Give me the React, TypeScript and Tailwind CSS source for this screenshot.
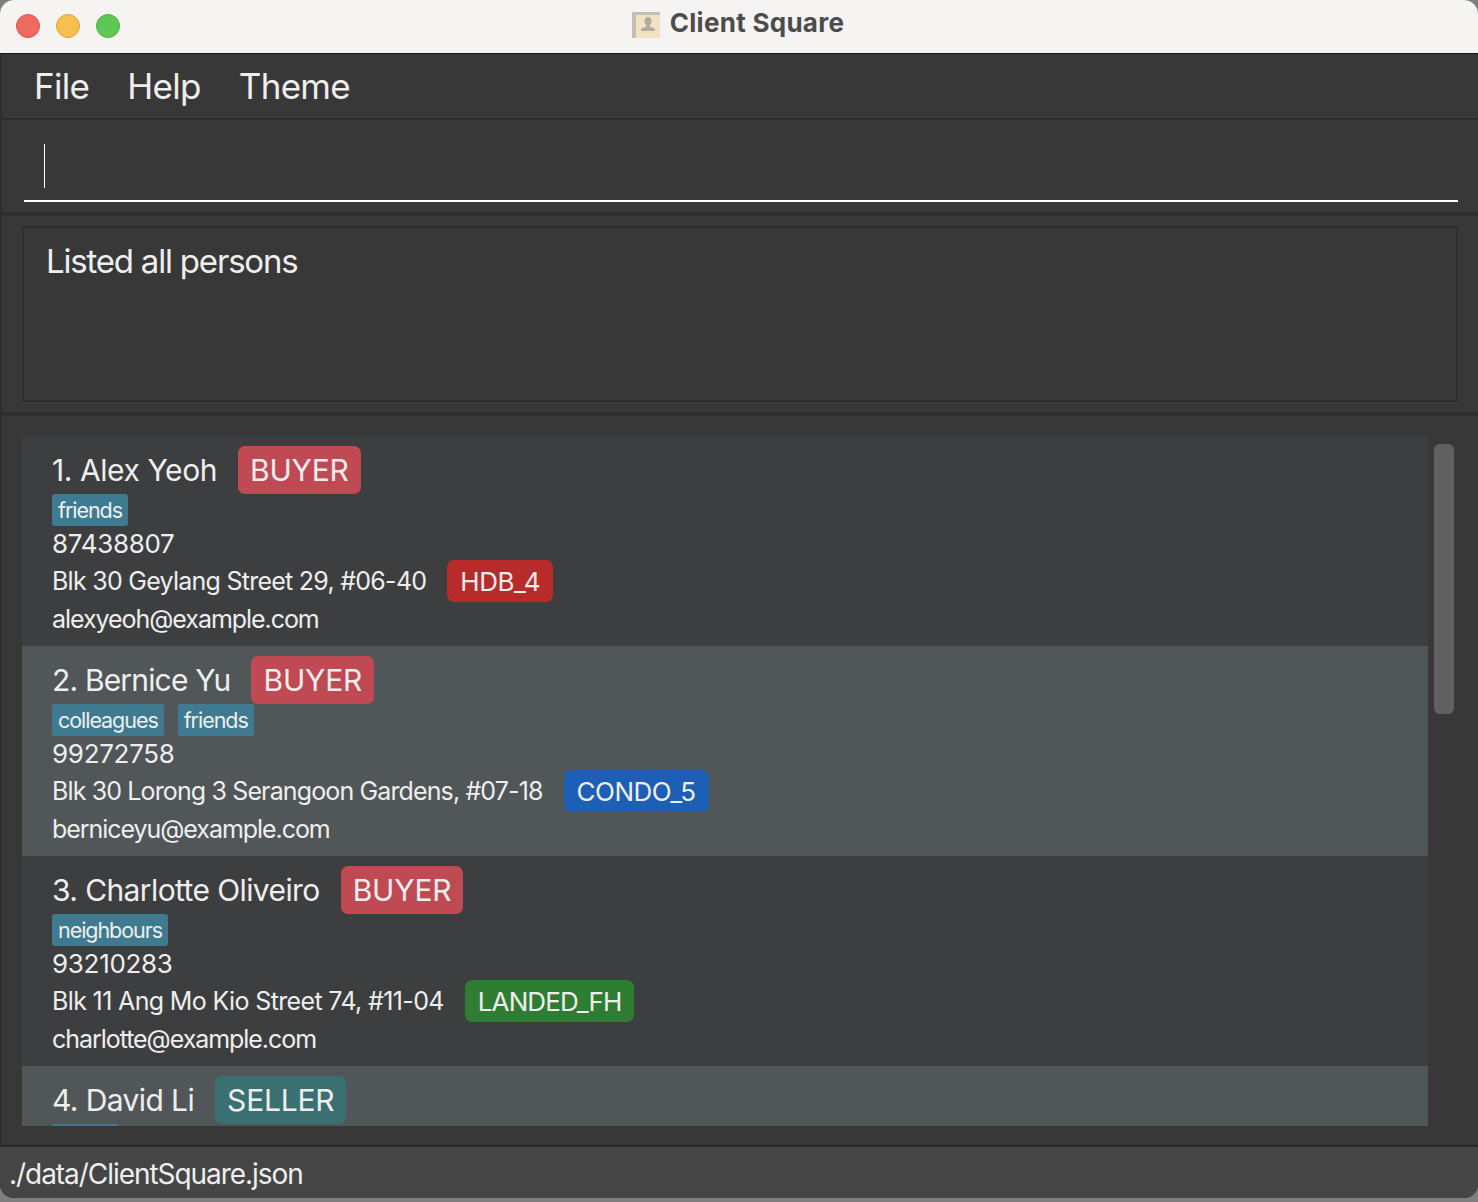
const FONT = "font-['Inter','Liberation_Sans',sans-serif]";

type Person = {
  name: string;
  // tracking is set per row, the reference font is narrower on some letters than Inter
  nameClass: string;
  role: "BUYER" | "SELLER";
  tags: string[];
  phone?: string;
  address?: string;
  addressClass?: string;
  property?: string;
  propertyClass?: string;
  email?: string;
};

const persons: Person[] = [
  {
    name: "1. Alex Yeoh",
    nameClass: "tracking-[-0.43px]",
    role: "BUYER",
    tags: ["friends"],
    phone: "87438807",
    address: "Blk 30 Geylang Street 29, #06-40",
    addressClass: "tracking-[-0.74px]",
    property: "HDB_4",
    propertyClass: "bg-[#b92b2b] tracking-[-0.5px]",
    email: "alexyeoh@example.com",
  },
  {
    name: "2. Bernice Yu",
    nameClass: "tracking-[-0.83px]",
    role: "BUYER",
    tags: ["colleagues", "friends"],
    phone: "99272758",
    address: "Blk 30 Lorong 3 Serangoon Gardens, #07-18",
    addressClass: "tracking-[-0.87px]",
    property: "CONDO_5",
    propertyClass: "bg-[#1d5fb4] tracking-[-0.5px]",
    email: "berniceyu@example.com",
  },
  {
    name: "3. Charlotte Oliveiro",
    nameClass: "tracking-[-0.6px]",
    role: "BUYER",
    tags: ["neighbours"],
    phone: "93210283",
    address: "Blk 11 Ang Mo Kio Street 74, #11-04",
    addressClass: "tracking-[-0.64px]",
    property: "LANDED_FH",
    propertyClass: "bg-[#2f7d32] tracking-[-0.9px]",
    email: "charlotte@example.com",
  },
  // only the top of this card is on screen, the list clips the rest
  { name: "4. David Li", nameClass: "tracking-[-0.6px]", role: "SELLER", tags: ["family"] },
];

function AppIcon() {
  return (
    <svg width="28" height="26" viewBox="0 0 28 26" className="mt-[4px] mr-[10px]">
      <rect x="0" y="0" width="28" height="26" rx="1" fill="#c4bfb6" />
      <rect x="4" y="3" width="24" height="23" fill="#f0e2c2" />
      <path d="M16 5c2.400 0 3.500 1.800 3.500 4 0 1.800-.8 3.200-1.700 4v1.600l5.200 2.200V19H9v-2.200l5.200-2.200V13c-.9-.8-1.700-2.200-1.700-4 0-2.200 1.100-4 3.500-4z" fill="#b5ab9a" />
    </svg>
  );
}

function PersonCard({ person, index }: { person: Person; index: number }) {
  const roleBg = person.role === "BUYER" ? "bg-[#bf4a53]" : "bg-[#3a7071]";
  return (
    <div className={`h-[210px] shrink-0 pl-[30px] ${index % 2 === 0 ? "bg-[#3d3e40]" : "bg-[#515658]"}`}>
      <div className="flex h-[58px] items-center pt-[10px]">
        <span className={`text-[30px] text-[#eeeeee] ${person.nameClass}`}>{person.name}</span>
        <span className={`ml-[21px] flex h-[48px] items-center rounded-[7px] px-[12px] text-[30px] tracking-[-0.2px] text-[#eeeeee] ${roleBg}`}>
          {person.role}
        </span>
      </div>
      <div className="flex h-[32px] gap-[14px]">
        {person.tags.map((tag) => (
          <span key={tag} className="flex h-[32px] items-center rounded-[3px] bg-[#3e7b91] px-[6px] text-[21.500px] tracking-[-1.050px] text-[#eeeeee]">
            {tag}
          </span>
        ))}
      </div>
      {person.phone && (
        <>
          <div className="flex h-[34px] items-center text-[26px] tracking-[-0.3px] text-[#eeeeee]">{person.phone}</div>
          <div className="flex h-[42px] items-center text-[#eeeeee]">
            <span className={`pt-[2px] text-[25px] ${person.addressClass}`}>{person.address}</span>
            <span className={`ml-[21px] flex h-[42px] items-center rounded-[7px] px-[13px] text-[26px] ${person.propertyClass}`}>{person.property}</span>
          </div>
          <div className="flex h-[34px] items-center pt-[2px] text-[25px] tracking-[-1.050px] text-[#eeeeee]">{person.email}</div>
        </>
      )}
    </div>
  );
}

export default function App() {
  return (
    <div className={`h-[1202px] w-[1478px] overflow-hidden bg-[#7f7f7f] ${FONT}`}>
      <div className="flex h-[1198px] flex-col overflow-hidden rounded-[14px] bg-[#383838]">
        <div className="relative flex h-[54px] shrink-0 items-center justify-center border-b border-[#1a1a1a] bg-[#f5f4f2]">
          <div className="absolute top-[14px] left-[16px] flex gap-[16px]">
            <span className="h-[24px] w-[24px] rounded-full border border-[#d9534c] bg-[#ee6a5f]" />
            <span className="h-[24px] w-[24px] rounded-full border border-[#dfa23e] bg-[#f5c04f]" />
            <span className="h-[24px] w-[24px] rounded-full border border-[#4fb045] bg-[#5fc854]" />
          </div>
          <div className="flex items-center pr-[2px] pb-[8px]">
            <AppIcon />
            <span className="text-[26px] font-bold tracking-[0.28px] text-[#4c4c4c]">Client Square</span>
          </div>
        </div>

        <div className="flex h-[64px] shrink-0 items-center gap-[38px] border-l-2 border-[#2e2e2e] pl-[32px] text-[35px] tracking-[-0.7px] text-[#eeeeee]">
          <span>File</span>
          <span>Help</span>
          <span>Theme</span>
        </div>

        <div className="h-[94px] shrink-0 border-t-2 border-l-2 border-[#2e2e2e] pr-[20px] pl-[22px]">
          <div className="flex h-[82px] items-end border-b-2 border-white pb-[12px] pl-[20px]">
            <span className="h-[44px] w-px bg-white" />
          </div>
        </div>

        <div className="h-[200px] shrink-0 border-t-4 border-l-2 border-[#2e2e2e] px-[20px] pt-[10px]">
          <div className="h-[176px] border-2 border-[#2e2e2e] px-[22px] pt-[9px] text-[33px] tracking-[-1.200px] text-[#eeeeee]">
            Listed all persons
          </div>
        </div>

        <div className="flex h-[733px] shrink-0 border-t-4 border-l-2 border-[#2e2e2e] pt-[20px] pl-[20px]">
          <div className="flex h-[690px] w-[1406px] flex-col overflow-hidden">
            {persons.map((p, i) => (
              <PersonCard key={p.name} person={p} index={i} />
            ))}
          </div>
          <div className="mt-[8px] ml-[6px] h-[270px] w-[20px] rounded-[6px] bg-[#606060]" />
        </div>

        <div className="flex flex-1 items-center border-t-2 border-[#2a2a2a] bg-[#454545] pt-[2px] pl-[9px] text-[28px] tracking-[-1.050px] text-[#eeeeee]">
          ./data/ClientSquare.json
        </div>
      </div>
    </div>
  );
}
